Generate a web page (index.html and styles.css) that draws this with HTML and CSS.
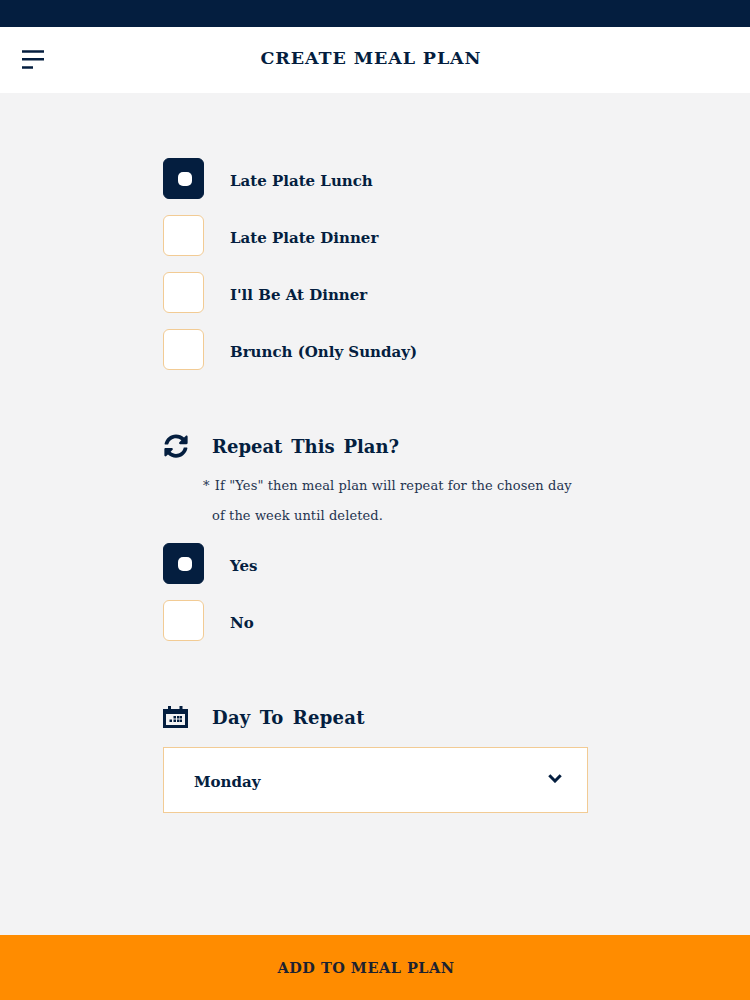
FILE: index.html
```html
<!DOCTYPE html>
<html lang="en">
<head>
<meta charset="utf-8">
<title>Create Meal Plan</title>
<link rel="stylesheet" href="styles.css">
</head>
<body>
<div class="page">
  <div class="status"></div>
  <header class="header">
    <svg class="menu" width="22" height="20" viewBox="0 0 22 20"><path d="M0 1.300h22v2.500H0zM0 9h22v2.500H0zM0 17.200h11v2.500H0z"/></svg>
    <h1 class="title">CREATE MEAL PLAN</h1>
  </header>
  <main class="main">
    <section class="options">
      <div class="row"><span class="box on"><span class="dot"></span></span><span class="label">Late Plate Lunch</span></div>
      <div class="row"><span class="box"></span><span class="label">Late Plate Dinner</span></div>
      <div class="row"><span class="box"></span><span class="label">I'll Be At Dinner</span></div>
      <div class="row"><span class="box"></span><span class="label">Brunch (Only Sunday)</span></div>
    </section>
    <section class="repeat">
      <div class="heading">
        <svg class="icon icon-refresh" width="24" height="24" viewBox="0 0 512 512"><path d="M370.720 133.280C339.458 104.008 298.888 87.962 255.848 88c-77.458.068-144.328 53.178-162.791 126.850-1.344 5.363-6.122 9.150-11.651 9.150H24.103c-7.498 0-13.194-6.807-11.807-14.176C33.933 94.924 134.813 8 256 8c66.448 0 126.791 26.136 171.315 68.685L463.030 40.970C478.149 25.851 504 36.559 504 57.941V192c0 13.255-10.745 24-24 24H345.941c-21.382 0-32.090-25.851-16.971-40.971l41.750-41.749zM32 296h134.059c21.382 0 32.090 25.851 16.971 40.971l-41.750 41.750c31.262 29.273 71.835 45.319 114.876 45.280 77.418-.070 144.315-53.144 162.787-126.849 1.344-5.363 6.122-9.150 11.651-9.150h57.304c7.498 0 13.194 6.807 11.807 14.176C478.067 417.076 377.187 504 256 504c-66.448 0-126.791-26.136-171.315-68.685L48.970 471.030C33.851 486.149 8 475.441 8 454.059V320c0-13.255 10.745-24 24-24z"/></svg>
        <h2 class="heading-text">Repeat This Plan?</h2>
      </div>
      <p class="note"><span class="star">*</span> If "Yes" then meal plan will repeat for the chosen day<br><span class="note-cont">of the week until deleted.</span></p>
      <div class="options">
        <div class="row"><span class="box on"><span class="dot"></span></span><span class="label">Yes</span></div>
        <div class="row"><span class="box"></span><span class="label">No</span></div>
      </div>
    </section>
    <section class="day">
      <div class="heading">
        <svg class="icon" width="25" height="22" viewBox="0 0 25 22"><path fill-rule="evenodd" d="M5 0h3v3h8.500V0h3v3H25v19H0V3h5zM3 8v11h19V8z"/><path d="M10.500 10h2.500v2.500h-2.500zM14 10h2.500v2.500H14zM17 10h2v2.500h-2zM6.500 13.500H9V16H6.500zM10.500 13.500H13V16h-2.500zM14 13.500h2.500V16H14zM17 13.500h2V16h-2z"/></svg>
        <h2 class="heading-text heading-day">Day To Repeat</h2>
      </div>
      <div class="select">
        <span class="select-value">Monday</span>
        <svg class="chev" width="14" height="9" viewBox="0 0 14 9"><path d="M1.300 1.300L7 7l5.700-5.700" fill="none" stroke-width="3"/></svg>
      </div>
    </section>
  </main>
  <footer class="footer">ADD TO MEAL PLAN</footer>
</div>
</body>
</html>
```
FILE: styles.css
```css
* { box-sizing: border-box; }
html, body { margin: 0; padding: 0; }
body { font-family: "DejaVu Serif", "Liberation Serif", serif; color: #041e3f; }
.page { width: 750px; height: 1000px; display: flex; flex-direction: column; background: #f3f3f4; overflow: hidden; }
.status { height: 27px; background: #041e3f; flex: none; }
.header { height: 66px; flex: none; background: #fff; position: relative; display: flex; align-items: center; justify-content: center; padding: 0 0 4px 0; }
.menu { position: absolute; left: 22px; top: 22px; fill: #041e3f; }
.title { margin: 0 0 0 -8px; font-size: 17.500px; font-weight: 700; letter-spacing: .9px; }
.main { flex: 1; padding: 65px 163px 0; }
.options { display: flex; flex-direction: column; gap: 16px; }
.row { display: flex; align-items: center; gap: 26px; height: 41px; }
.box { width: 41px; height: 41px; flex: none; border-radius: 6px; background: #fff; border: 1px solid #f2cb94; display: flex; align-items: center; justify-content: center; }
.box.on { background: #041e3f; border-color: #041e3f; }
.dot { width: 14px; height: 14px; border-radius: 5px; background: #fff; margin-left: 2px; }
.label { font-size: 15px; font-weight: 700; margin-top: 4px; }
.repeat { margin-top: 61px; }
.heading { display: flex; align-items: center; gap: 24px; height: 30px; }
.icon { fill: #041e3f; flex: none; }
.icon-refresh { margin: 0 0 1px 1px; }
.heading-text { margin: 0; font-size: 18px; font-weight: 700; word-spacing: 2.500px; }
.heading-day { letter-spacing: .3px; }
.note { margin: 10px 0 12px 40px; font-size: 13px; line-height: 30px; letter-spacing: .1px; color: #1f3350; white-space: nowrap; }
.star { margin-right: 1px; }
.note-cont { margin-left: 9px; }
.day { margin-top: 61px; }
.day .heading { margin-bottom: 15px; }
.select { width: 425px; height: 66px; background: #fff; border: 1px solid #f2cb94; display: flex; align-items: center; justify-content: space-between; padding: 0 25px 0 30px; }
.select-value { font-size: 15px; font-weight: 700; margin-top: 3px; }
.chev { stroke: #041e3f; margin-top: -3px; }
.footer { height: 65px; flex: none; background: #ff8c00; color: #1c2230; display: flex; align-items: center; justify-content: center; font-size: 14.500px; font-weight: 700; letter-spacing: .5px; padding-right: 18px; }
```
